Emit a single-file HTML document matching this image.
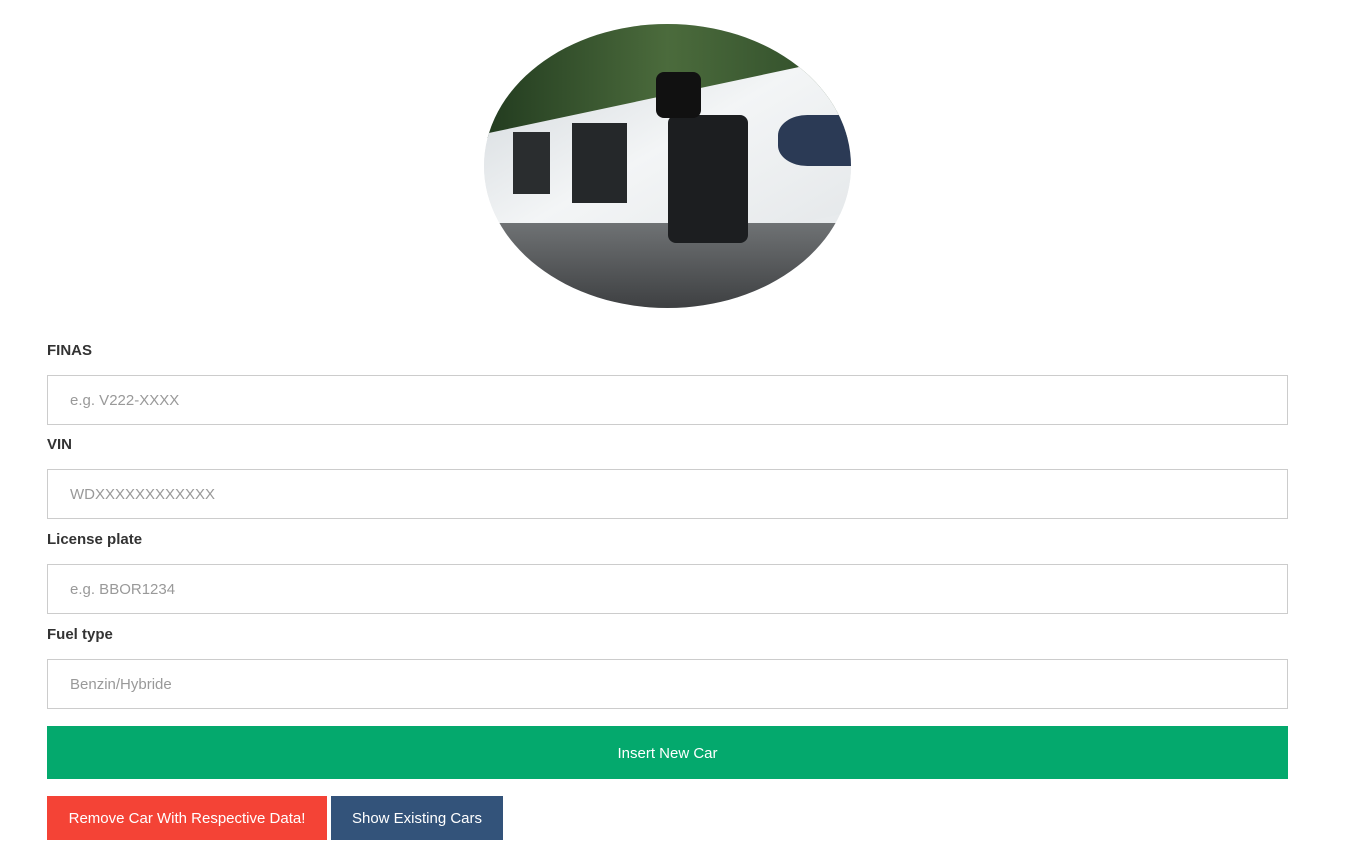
<!DOCTYPE html>
<html><head><style>
body{margin:0;background:#fff;font-family:"Liberation Sans",sans-serif;font-size:15px;color:#333;}
.img{position:absolute;left:484px;top:24px;width:367px;height:284px;border-radius:50%;overflow:hidden;background:#e8ebed;}
label{position:absolute;left:47px;font-weight:bold;font-size:15px;color:#333;}
.in{position:absolute;left:47px;border:1px solid #ccc;color:#999;font-size:15px;line-height:50px;padding-left:22px;box-sizing:border-box;width:1241px;height:50px;}
.btn{position:absolute;color:#fff;font-size:15px;text-align:center;}
</style></head><body>
<div class="img">
<div style="position:absolute;left:0;top:0;width:100%;height:40%;background:linear-gradient(90deg,#223b1f,#4b6b3c 50%,#2d4a28)"></div>
<div style="position:absolute;left:0;top:25%;width:100%;height:55%;background:linear-gradient(160deg,#dfe3e6 0%,#f3f5f6 40%,#e6e9eb 100%);transform:skewY(-12deg)"></div>
<div style="position:absolute;left:0;top:70%;width:100%;height:30%;background:linear-gradient(180deg,#6f7274,#3e4042)"></div>
<div style="position:absolute;left:50%;top:32%;width:22%;height:45%;background:#1c1e20;border-radius:8px"></div>
<div style="position:absolute;left:24%;top:35%;width:15%;height:28%;background:#25282a"></div>
<div style="position:absolute;left:8%;top:38%;width:10%;height:22%;background:#2a2d2f"></div>
<div style="position:absolute;left:47%;top:17%;width:12%;height:16%;background:#111;border-radius:8px"></div>
<div style="position:absolute;left:80%;top:32%;width:20%;height:18%;background:#2b3a55;border-radius:40% 0 0 40%"></div>
</div>
<label style="top:342px">FINAS</label>
<div class="in" style="top:375px">e.g. V222-XXXX</div>
<label style="top:436px">VIN</label>
<div class="in" style="top:469px">WDXXXXXXXXXXXX</div>
<label style="top:531px">License plate</label>
<div class="in" style="top:564px">e.g. BBOR1234</div>
<label style="top:626px">Fuel type</label>
<div class="in" style="top:659px">Benzin/Hybride</div>
<div class="btn" style="left:47px;top:726px;width:1241px;height:53px;line-height:55px;background:#04a96d">Insert New Car</div>
<div class="btn" style="left:47px;top:796px;width:280px;height:44px;line-height:46px;background:#f44336">Remove Car With Respective Data!</div>
<div class="btn" style="left:331px;top:796px;width:172px;height:44px;line-height:46px;background:#33537a">Show Existing Cars</div>
</body></html>
